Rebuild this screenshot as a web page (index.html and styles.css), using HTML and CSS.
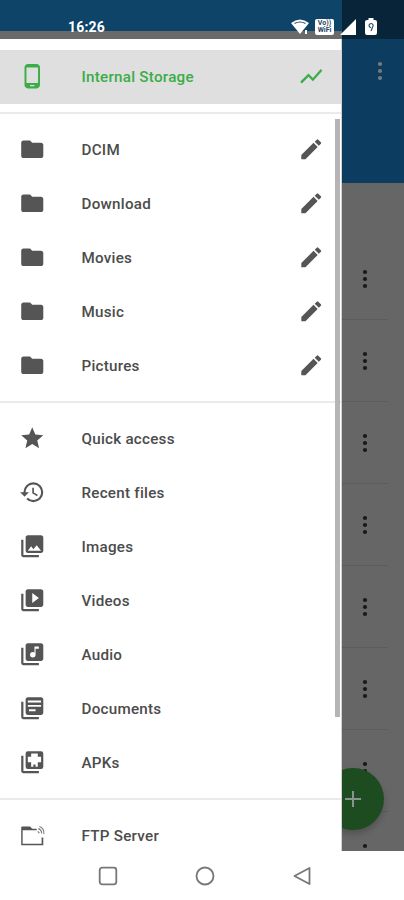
FILE: index.html
```
<!DOCTYPE html>
<html lang="en">
<head>
<meta charset="utf-8">
<title>Files</title>
<link rel="stylesheet" href="styles.css">
</head>
<body>
<svg class="defs" aria-hidden="true">
  <symbol id="folder" viewBox="0 0 24 24"><path d="M10 4H4c-1.1 0-2 .9-2 2v12c0 1.1.9 2 2 2h16c1.1 0 2-.9 2-2V8c0-1.1-.9-2-2-2h-8z"/></symbol>
  <symbol id="pencil" viewBox="0 0 24 24"><path d="M3 17.25V21h3.75L17.81 9.94l-3.75-3.75zM20.71 7.04a1 1 0 0 0 0-1.41l-2.34-2.34a1 1 0 0 0-1.41 0l-1.83 1.83 3.75 3.75z"/></symbol>
  <symbol id="more" viewBox="0 0 24 24"><circle cx="12" cy="6" r="1.8"/><circle cx="12" cy="12" r="1.8"/><circle cx="12" cy="18" r="1.8"/></symbol>
</svg>
<div class="phone">
  <div class="app">
    <div class="app-status"></div>
    <header class="app-bar"><svg class="more"><use href="#more"/></svg></header>
    <div class="list">
      <div class="file"><svg class="more"><use href="#more"/></svg></div>
      <div class="file"><svg class="more"><use href="#more"/></svg></div>
      <div class="file"><svg class="more"><use href="#more"/></svg></div>
      <div class="file"><svg class="more"><use href="#more"/></svg></div>
      <div class="file"><svg class="more"><use href="#more"/></svg></div>
      <div class="file"><svg class="more"><use href="#more"/></svg></div>
      <div class="file"><svg class="more"><use href="#more"/></svg></div>
      <div class="file"><svg class="more"><use href="#more"/></svg></div>
    </div>
    <div class="fab"><svg viewBox="0 0 16 16"><path d="M8 0v16M0 8h16"/></svg></div>
  </div>

  <aside class="drawer">
    <div class="drawer-status"></div>
    <div class="drawer-strip"></div>
    <nav class="menu">
      <div class="row active"><svg class="icon" viewBox="0 0 24 24"><path d="M16 1H8C6.34 1 5 2.34 5 4v16c0 1.66 1.34 3 3 3h8c1.66 0 3-1.34 3-3V4c0-1.66-1.34-3-3-3zm-2 20h-4v-1h4zm3.25-3H6.75V4h10.5z"/></svg><span>Internal Storage</span><svg class="icon" viewBox="0 0 24 24"><path d="M3.5 18.49l6-6.01 4 4L22 6.92l-1.41-1.41-7.09 7.97-4-4L2 16.99z"/></svg></div>
      <hr>
      <div class="row"><svg class="icon"><use href="#folder"/></svg><span>DCIM</span><svg class="icon"><use href="#pencil"/></svg></div>
      <div class="row"><svg class="icon"><use href="#folder"/></svg><span>Download</span><svg class="icon"><use href="#pencil"/></svg></div>
      <div class="row"><svg class="icon"><use href="#folder"/></svg><span>Movies</span><svg class="icon"><use href="#pencil"/></svg></div>
      <div class="row"><svg class="icon"><use href="#folder"/></svg><span>Music</span><svg class="icon"><use href="#pencil"/></svg></div>
      <div class="row"><svg class="icon"><use href="#folder"/></svg><span>Pictures</span><svg class="icon"><use href="#pencil"/></svg></div>
      <hr>
      <div class="row"><svg class="icon" viewBox="0 0 24 24"><path d="M12 17.27L18.18 21l-1.64-7.03L22 9.24l-7.19-.61L12 2 9.19 8.63 2 9.24l5.46 4.73L5.82 21z"/></svg><span>Quick access</span></div>
      <div class="row"><svg class="icon" viewBox="0 0 24 24"><path d="M13 3a9 9 0 0 0-9 9H1l3.89 3.89.07.14L9 12H6c0-3.87 3.13-7 7-7s7 3.13 7 7-3.13 7-7 7a6.97 6.97 0 0 1-4.94-2.06l-1.42 1.42A8.95 8.95 0 0 0 13 21a9 9 0 0 0 0-18zm-1 5v5l4.28 2.54.72-1.21-3.5-2.08V8z"/></svg><span>Recent files</span></div>
      <div class="row"><svg class="icon" viewBox="0 0 24 24"><path d="M22 16V4c0-1.1-.9-2-2-2H8c-1.1 0-2 .9-2 2v12c0 1.1.9 2 2 2h12c1.1 0 2-.9 2-2zm-11-4l2.03 2.71L16 11l4 5H8zM2 6v14c0 1.1.9 2 2 2h14v-2H4V6z"/></svg><span>Images</span></div>
      <div class="row"><svg class="icon" viewBox="0 0 24 24"><path d="M4 6H2v14c0 1.1.9 2 2 2h14v-2H4zm16-4H8c-1.1 0-2 .9-2 2v12c0 1.1.9 2 2 2h12c1.1 0 2-.9 2-2V4c0-1.1-.9-2-2-2zm-8 12.5v-9l6 4.5z"/></svg><span>Videos</span></div>
      <div class="row"><svg class="icon" viewBox="0 0 24 24"><path d="M20 2H8c-1.1 0-2 .9-2 2v12c0 1.1.9 2 2 2h12c1.1 0 2-.9 2-2V4c0-1.1-.9-2-2-2zm-2 5h-3v5.5a2.5 2.5 0 1 1-2.5-2.5c.57 0 1.08.19 1.5.51V5h4zM4 6H2v14c0 1.1.9 2 2 2h14v-2H4z"/></svg><span>Audio</span></div>
      <div class="row"><svg class="icon" viewBox="0 0 24 24"><path d="M4 6H2v14c0 1.1.9 2 2 2h14v-2H4zm16-4H8c-1.1 0-2 .9-2 2v12c0 1.1.9 2 2 2h12c1.1 0 2-.9 2-2V4c0-1.1-.9-2-2-2zm0 8.700H8V9h12zm-5 4H9v-1.700h6zm5-8H8V5h12z"/></svg><span>Documents</span></div>
      <div class="row"><svg class="icon" viewBox="0 0 24 24"><path fill-rule="evenodd" d="M4 6H2v14c0 1.1.9 2 2 2h14v-2H4zM8 2h12a2 2 0 0 1 2 2v12a2 2 0 0 1-2 2H8a2 2 0 0 1-2-2V4a2 2 0 0 1 2-2zM11 4v3H8v5h3v4h2v-2h2v2h2v-4h3V7h-3V4z"/></svg><span>APKs</span></div>
      <hr>
      <div class="row"><svg class="icon" viewBox="0 0 24 24"><path d="M2 21V5c0-.6.4-1 1-1h7l2 2h4v1.500H3.300v12.100h17.200V14H22v7z"/><path class="waves" d="M17 8.500l1.500 1.500M17.500 6q3 1 3 4.500M18.500 4q4.500 1.500 4 7"/></svg><span>FTP Server</span></div>
    </nav>
    <div class="scrollbar"></div>
  </aside>

  <div class="status">
    <span class="clock">16:26</span>
    <svg class="wifi" viewBox="0 0 18 16"><path d="M0 4Q9-3 18 4L9 15z"/><path class="cut" d="M3.5 4.5Q9 1.5 14.5 4.5"/><path d="M14 11h2v4h-2z"/></svg>
    <span class="vowifi"><span>Vo))</span><span>WiFi</span></span>
    <svg class="signal" viewBox="0 0 16 16"><path d="M16 0v16H0z"/></svg>
    <svg class="battery" viewBox="0 0 12 17"><path d="M3.5 0h5v2H10a2 2 0 0 1 2 2v11a2 2 0 0 1-2 2H2a2 2 0 0 1-2-2V4a2 2 0 0 1 2-2h1.5z"/><path class="cut" d="M6 13l2-5a2 2 0 1 0-2 1.5"/></svg>
  </div>

  <footer class="navbar">
    <svg viewBox="0 0 20 20"><rect x="1.7" y="1.7" width="16.6" height="16.6" rx="2.5"/></svg>
    <svg viewBox="0 0 20 20"><circle cx="10" cy="10" r="8.5"/></svg>
    <svg viewBox="0 0 20 20"><path d="M17.5 2v16L2.5 10z"/></svg>
  </footer>
</div>
</body>
</html>
```
FILE: styles.css
```
* { box-sizing: border-box; }
body { margin: 0; font-family: Roboto, "Liberation Sans", sans-serif; }
.defs { position: absolute; width: 0; height: 0; }
svg { display: block; flex: none; }

.phone {
  position: relative;
  width: 404px;
  height: 900px;
  overflow: hidden;
  background: #fff;
  display: flex;
  flex-direction: column;
}

.app { position: relative; height: 851px; overflow: hidden; background: #666; flex: none; }
.app-status { height: 39px; background: #072439; }
.app-bar {
  height: 144px;
  background: #0c3c60;
  display: flex;
  justify-content: flex-end;
  padding: 18px 10px 0 0;
}
.more { width: 28px; height: 28px; fill: #181818; }
.app-bar .more { fill: #777b7e; }
.list { padding: 55px 16px 0 0; }
.file {
  height: 82px;
  border-bottom: 1px solid #5c5c5c;
  display: flex;
  align-items: center;
  justify-content: flex-end;
  padding: 1px 9.5px 0 0;
}
.fab {
  position: absolute;
  left: 322px;
  top: 768px;
  width: 62px;
  height: 62px;
  border-radius: 50%;
  background: #1c4c20;
  box-shadow: 0 4px 6px rgba(0, 0, 0, .2);
  display: flex;
  align-items: center;
  justify-content: center;
}
.fab svg { width: 16px; height: 16px; stroke: #8a948b; stroke-width: 2; }

.drawer {
  position: absolute;
  left: 0;
  top: 0;
  width: 342px;
  height: 851px;
  overflow: hidden;
  background: #fff;
  display: flex;
  flex-direction: column;
}
.drawer-status { height: 31px; background: #0f4469; flex: none; }
.drawer-strip { height: 8px; background: #6a6a6a; flex: none; }
.menu { padding-top: 11px; border-right: 1px solid #d2d2d2; }
.row {
  height: 54px;
  display: flex;
  align-items: center;
  padding: 0 17px 0 18.5px;
  color: #4c4c4c;
  fill: #555;
  font-size: 15.2px;
  font-weight: 500;
  letter-spacing: .25px;
}
.row span { flex: 1; margin-left: 36.5px; }
.active { background: #dfdfdf; color: #3aad47; fill: #3aad47; }
.icon { width: 26.5px; height: 26.5px; margin-bottom: 1.5px; }
.waves { fill: none; stroke: #777; stroke-width: 1; }
hr { margin: 8px 0 9px; border: 0; height: 2px; background: #eaeaea; }
.scrollbar {
  position: absolute;
  right: 2px;
  top: 119px;
  width: 5px;
  height: 598px;
  background: #b5b5b5;
}

.status {
  position: absolute;
  left: 0;
  top: 17px;
  width: 404px;
  height: 19px;
  padding-left: 68px;
  display: flex;
  align-items: center;
  color: #fff;
  fill: #fff;
}
.clock { width: 223px; font-size: 14px; font-weight: 700; letter-spacing: .2px; }
.cut { fill: none; stroke: #34506a; stroke-width: 1.2; }
.wifi { width: 18px; height: 16px; }
.vowifi {
  width: 19px;
  height: 16px;
  margin: 0 6px;
  border-radius: 2px;
  background: #fff;
  color: #25435f;
  font-size: 7px;
  font-weight: 700;
  line-height: 7px;
  padding-top: 1px;
  text-align: center;
  display: flex;
  flex-direction: column;
}
.signal { width: 16px; height: 16px; }
.battery { width: 12px; height: 17px; margin-left: 9px; }

.navbar {
  height: 49px;
  display: flex;
  justify-content: center;
  gap: 77px;
  padding: 15px 0 0 5px;
}
.navbar svg { width: 20px; height: 20px; fill: none; stroke: #777; stroke-width: 1.8; stroke-linejoin: round; }
```
